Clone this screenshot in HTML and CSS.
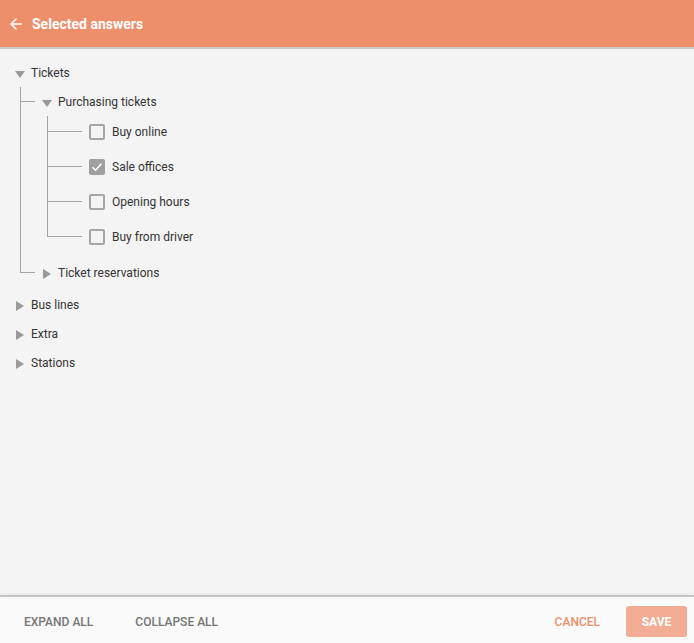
FILE: index.html
```html
<!DOCTYPE html>
<html lang="en">
<head>
  <meta charset="UTF-8" />
  <meta name="viewport" content="width=device-width, initial-scale=1.0" />
  <title>Selected answers</title>
  <link rel="stylesheet" href="styles.css">
</head>
<body>
  <!-- ===== header ===== -->
  <header class="app-header">
    <button class="back-btn" aria-label="Back">
      <svg width="18" height="18" viewBox="0 0 24 24"><path d="M20 11H7.83l5.59-5.59L12 4l-8 8 8 8 1.41-1.41L7.83 13H20v-2z" fill="#fff"/></svg>
    </button>
    <span class="header-title">Selected answers</span>
  </header>

  <!-- ===== answer tree ===== -->
  <main class="content">
    <ul class="tree">
      <li class="open">
        <div class="node-row"><span class="toggle down"></span><span class="label">Tickets</span></div>
        <ul class="tree-children">
          <li class="open">
            <div class="node-row"><span class="toggle down"></span><span class="label">Purchasing tickets</span></div>
            <ul class="tree-children leaf-list">
              <li><div class="leaf-row"><span class="checkbox"></span><span class="label">Buy online</span></div></li>
              <li><div class="leaf-row"><span class="checkbox checked"><svg width="16" height="16" viewBox="0 0 16 16"><path d="M3.5 8.2l3 3 6-6.4" fill="none" stroke="#fff" stroke-width="1.6"/></svg></span><span class="label">Sale offices</span></div></li>
              <li><div class="leaf-row"><span class="checkbox"></span><span class="label">Opening hours</span></div></li>
              <li><div class="leaf-row"><span class="checkbox"></span><span class="label">Buy from driver</span></div></li>
            </ul>
          </li>
          <li>
            <div class="node-row"><span class="toggle right"></span><span class="label">Ticket reservations</span></div>
          </li>
        </ul>
      </li>
      <li><div class="node-row"><span class="toggle right"></span><span class="label">Bus lines</span></div></li>
      <li><div class="node-row"><span class="toggle right"></span><span class="label">Extra</span></div></li>
      <li><div class="node-row"><span class="toggle right"></span><span class="label">Stations</span></div></li>
    </ul>
  </main>

  <!-- ===== footer buttons ===== -->
  <footer class="app-footer">
    <div class="footer-left">
      <button class="text-btn">Expand all</button>
      <button class="text-btn">Collapse all</button>
    </div>
    <div class="footer-right">
      <button class="text-btn accent">Cancel</button>
      <button class="save-btn">Save</button>
    </div>
  </footer>
</body>
</html>
```

FILE: styles.css
```css
* {
  box-sizing: border-box;
}

html, body {
  margin: 0;
  padding: 0;
  height: 100%;
  font-family: Roboto, "Liberation Sans", sans-serif;
  background-color: #f4f4f4;
  color: #333;
}

body {
  display: flex;
  flex-direction: column;
}

button {
  font-family: inherit;
  cursor: pointer;
}

/* ===== header ===== */
.app-header {
  height: 49px;
  flex-shrink: 0;
  display: flex;
  align-items: center;
  padding: 0 7px;
  background-color: #ee8f6b;
  border-bottom: 2px solid #c9c9c9;
}

.back-btn {
  background: transparent;
  border: none;
  padding: 0;
  margin-right: 7px;
  width: 18px;
  height: 18px;
  display: flex;
}

.header-title {
  color: #fff;
  font-size: 14px;
  font-weight: 700;
}

/* ===== tree ===== */
.content {
  flex: 1;
  padding-top: 9px;
}

.tree,
.tree-children {
  list-style: none;
  margin: 0;
  padding: 0;
}

.tree-children {
  margin-left: 27px;
  margin-bottom: 3px;
}

.leaf-list {
  margin-top: -2px;
  margin-bottom: 0;
  padding-bottom: 4px;
}

.tree-children > li {
  position: relative;
}

/* vertical connector */
.tree-children > li::before {
  content: "";
  position: absolute;
  left: -7px;
  top: 0;
  bottom: 0;
  border-left: 1px solid #a3a3a3;
}

.tree-children > li:last-child::before {
  bottom: auto;
  height: 15px;
}

.leaf-list > li:last-child::before {
  height: 18px;
}

.leaf-list > li:first-child::before {
  top: 2px;
}

/* horizontal connector */
.tree-children > li::after {
  content: "";
  position: absolute;
  left: -7px;
  top: 14px;
  width: 15px;
  border-top: 1px solid #a3a3a3;
}

.leaf-list > li::after {
  top: 17px;
  width: 35px;
}

.node-row {
  height: 29px;
  display: flex;
  align-items: center;
  padding-left: 15px;
  font-size: 12px;
}

.leaf-row {
  height: 35px;
  display: flex;
  align-items: center;
  padding-left: 35px;
  font-size: 12px;
}

.toggle {
  width: 10px;
  height: 10px;
  margin-right: 6px;
  margin-top: 3px;
  display: flex;
  align-items: center;
  justify-content: center;
}

.toggle.down::before {
  content: "";
  border-left: 5px solid transparent;
  border-right: 5px solid transparent;
  border-top: 7px solid #9a9a9a;
}

.toggle.right::before {
  content: "";
  border-top: 5px solid transparent;
  border-bottom: 5px solid transparent;
  border-left: 8px solid #9a9a9a;
}

.checkbox {
  width: 16px;
  height: 16px;
  border: 2px solid #a6a6a6;
  border-radius: 2px;
  margin-right: 7px;
  position: relative;
  background-color: #f4f4f4;
}

.checkbox.checked {
  background-color: #a0a0a0;
  border-color: #a0a0a0;
}

.checkbox svg {
  position: absolute;
  left: -2px;
  top: -2px;
}

/* ===== footer ===== */
.app-footer {
  height: 48px;
  flex-shrink: 0;
  display: flex;
  align-items: center;
  justify-content: space-between;
  padding: 3px 7px 0 12px;
  background-color: #fafafa;
  border-top: 2px solid #c4c4c4;
  box-shadow: 0 -2px 3px rgba(0, 0, 0, 0.04);
}

.footer-left,
.footer-right {
  display: flex;
  align-items: center;
}

.footer-left {
  gap: 18px;
}

.footer-right {
  gap: 14px;
}

.text-btn {
  background: transparent;
  border: none;
  padding: 0 12px;
  height: 31px;
  font-size: 12px;
  font-weight: 500;
  text-transform: uppercase;
  color: #757575;
}

.text-btn.accent {
  color: #ee8f6b;
}

.save-btn {
  width: 61px;
  height: 31px;
  border: none;
  border-radius: 3px;
  background-color: #f2ad94;
  color: #fff;
  font-size: 12px;
  font-weight: 700;
  text-transform: uppercase;
}
```
